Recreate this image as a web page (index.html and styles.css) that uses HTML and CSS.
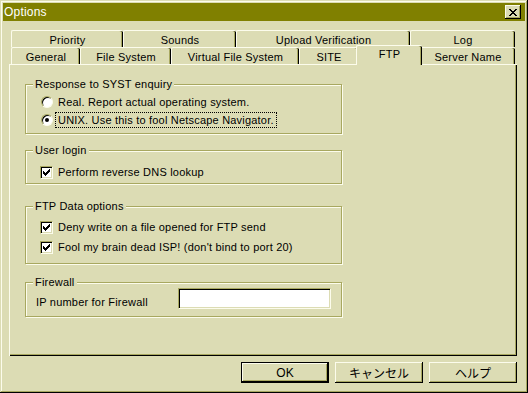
FILE: index.html
```html
<!DOCTYPE html>
<html lang="ja">
<head>
    <meta charset="UTF-8">
    <title>Options</title>
    <link rel="stylesheet" href="styles.css">
</head>
<body>
    <div class="window">
        <div class="titlebar">
            <span class="title">Options</span>
            <span class="close-btn">
                <svg width="8" height="7" viewBox="0 0 8 7"><path d="M0 0h2v1h1v1h2V1h1V0h2v1H7v1H6v1H5v1h1v1h1v1h1v1H6V6H5V5H3v1H2v1H0V6h1V5h1V4h1V3H2V2H1V1H0z" fill="#000"/></svg>
            </span>
        </div>

        <div class="tabs">
            <div class="tab-row back">
                <div class="tab">Priority</div>
                <div class="tab">Sounds</div>
                <div class="tab">Upload Verification</div>
                <div class="tab">Log</div>
            </div>
            <div class="tab-row front">
                <div class="tab">General</div>
                <div class="tab">File System</div>
                <div class="tab">Virtual File System</div>
                <div class="tab">SITE</div>
                <div class="tab selected">FTP</div>
                <div class="tab">Server Name</div>
            </div>
        </div>

        <div class="panel">
            <div class="group syst">
                <span class="legend">Response to SYST enquiry</span>
                <div class="option"><span class="radio"></span><span class="label">Real. Report actual operating system.</span></div>
                <div class="option"><span class="radio checked"></span><span class="label focus">UNIX. Use this to fool Netscape Navigator.</span></div>
            </div>

            <div class="group login">
                <span class="legend">User login</span>
                <div class="option"><span class="check checked"></span><span class="label">Perform reverse DNS lookup</span></div>
            </div>

            <div class="group data">
                <span class="legend">FTP Data options</span>
                <div class="option tall"><span class="check checked"></span><span class="label">Deny write on a file opened for FTP send</span></div>
                <div class="option tall"><span class="check checked"></span><span class="label">Fool my brain dead ISP! (don't bind to port 20)</span></div>
            </div>

            <div class="group firewall">
                <span class="legend">Firewall</span>
                <div class="field">
                    <span class="field-label">IP number for Firewall</span>
                    <span class="textbox"></span>
                </div>
            </div>
        </div>

        <div class="buttons">
            <button class="btn default">OK</button>
            <button class="btn">キャンセル</button>
            <button class="btn">ヘルプ</button>
        </div>
    </div>
</body>
</html>
```

FILE: styles.css
```css
body {
    margin: 0;
    background-color: #dcdcb4;
    font-family: "Liberation Sans", "Noto Sans CJK JP", sans-serif;
    font-size: 11px;
    letter-spacing: 0.2px;
    color: #000;
}

.window {
    width: 528px;
    height: 393px;
    box-sizing: border-box;
    padding: 3px;
    background-color: #dcdcb4;
    box-shadow: inset -1px -1px 0 #000, inset 1px 1px 0 #dcdcb4,
                inset -2px -2px 0 #a8a860, inset 2px 2px 0 #fcfcec;
}

.titlebar {
    height: 18px;
    background-color: #808000;
    display: flex;
    align-items: center;
    justify-content: space-between;
    padding: 0 4px 0 1px;
}

.title {
    color: #fff;
    font-size: 12px;
}

.close-btn {
    width: 16px;
    height: 14px;
    box-sizing: border-box;
    background-color: #dcdcb4;
    display: flex;
    align-items: center;
    justify-content: center;
    box-shadow: inset -1px -1px 0 #000, inset 1px 1px 0 #fcfcec,
                inset -2px -2px 0 #a8a860;
}

.tabs {
    margin-top: 9px;
    margin-left: 8px;
}

.tab-row {
    display: grid;
    height: 17px;
}

.back {
    grid-template-columns: 112px 113px 174px 105px;
}

.front {
    grid-template-columns: 69px 91px 128px 59px 62px 95px;
}

.tab {
    box-sizing: border-box;
    height: 17px;
    text-align: center;
    line-height: 16px;
    padding-top: 1px;
    border-top: 1px solid #fcfcec;
    border-left: 1px solid #fcfcec;
    border-radius: 2px 2px 0 0;
    box-shadow: inset -1px 0 0 #000, inset -2px 0 0 #a8a860;
}

.selected {
    position: relative;
    z-index: 2;
    height: 20px;
    margin: -2px -2px 0 -2px;
    padding-top: 0;
    background-color: #dcdcb4;
}

.panel {
    position: relative;
    margin-left: 6px;
    width: 508px;
    height: 292px;
    box-sizing: border-box;
    padding: 0 0 0 15px;
    border-top: 1px solid #fcfcec;
    border-left: 1px solid #fcfcec;
    box-shadow: inset -1px -1px 0 #000, inset -2px -2px 0 #a8a860;
    display: flex;
    flex-direction: column;
}

.group {
    position: relative;
    width: 317px;
    box-sizing: border-box;
    border: 1px solid #a8a860;
    box-shadow: inset 1px 1px 0 #fcfcec, 1px 1px 0 #fcfcec;
    padding-left: 15px;
}

.legend {
    position: absolute;
    top: -8px;
    left: 7px;
    padding: 0 2px 0 2px;
    background-color: #dcdcb4;
    line-height: 14px;
}

.syst {
    margin-top: 19px;
    height: 50px;
    padding-top: 8px;
}

.login {
    margin-top: 16px;
    height: 34px;
    padding-top: 12px;
    padding-left: 14px;
}

.data {
    margin-top: 22px;
    height: 58px;
    padding-top: 10px;
    padding-left: 14px;
}

.firewall {
    margin-top: 18px;
    height: 35px;
    padding: 5px 0 0 10px;
}

.option {
    display: flex;
    align-items: center;
    height: 18px;
}

.tall {
    height: 20px;
}

.label {
    margin-left: 2px;
    padding: 1px 2px;
    border: 1px solid transparent;
}

.focus {
    border: 1px dotted #000;
}

.radio {
    width: 12px;
    height: 12px;
    box-sizing: border-box;
    border-radius: 50%;
    background-color: #fff;
    border-top: 1px solid #a8a860;
    border-left: 1px solid #a8a860;
    border-right: 1px solid #fcfcec;
    border-bottom: 1px solid #fcfcec;
    box-shadow: inset 1px 1px 0 #000;
    display: flex;
    align-items: center;
    justify-content: center;
}

.radio.checked::after {
    content: "";
    width: 4px;
    height: 4px;
    border-radius: 50%;
    background-color: #000;
}

.check {
    width: 13px;
    height: 13px;
    box-sizing: border-box;
    background-color: #fff;
    border-top: 1px solid #a8a860;
    border-left: 1px solid #a8a860;
    border-right: 1px solid #fcfcec;
    border-bottom: 1px solid #fcfcec;
    box-shadow: inset 1px 1px 0 #000, inset -1px -1px 0 #dcdcb4;
    display: flex;
    align-items: center;
    justify-content: center;
}

.check.checked::after {
    content: "";
    width: 7px;
    height: 7px;
    background: no-repeat center / 7px 7px
        url("data:image/svg+xml,%3Csvg xmlns='http://www.w3.org/2000/svg' width='7' height='7'%3E%3Cpath d='M6 0h1v3H6v1H5v1H4v1H3v1H2V6H1V5H0V2h1v1h1v1h1V3h1V2h1V1h1z' fill='%23000'/%3E%3C/svg%3E");
}

.field {
    display: flex;
}

.field-label {
    width: 142px;
    padding-top: 8px;
}

.textbox {
    width: 153px;
    height: 21px;
    box-sizing: border-box;
    background-color: #fff;
    border-top: 1px solid #a8a860;
    border-left: 1px solid #a8a860;
    border-right: 1px solid #fcfcec;
    border-bottom: 1px solid #fcfcec;
    box-shadow: inset 1px 1px 0 #000, inset -1px -1px 0 #dcdcb4;
}

.buttons {
    display: flex;
    justify-content: flex-end;
    gap: 6px;
    margin-top: 6px;
    padding-right: 8px;
}

.btn {
    width: 88px;
    height: 21px;
    padding: 0;
    border: none;
    background-color: #dcdcb4;
    font-family: "Liberation Sans", "Noto Sans CJK JP", sans-serif;
    font-size: 12px;
    color: #000;
    box-shadow: inset -1px -1px 0 #000, inset 1px 1px 0 #fcfcec,
                inset -2px -2px 0 #a8a860;
}

.btn.default {
    box-shadow: inset 0 0 0 1px #000, inset -2px -2px 0 #000,
                inset 2px 2px 0 #fcfcec, inset -3px -3px 0 #a8a860;
}
```
